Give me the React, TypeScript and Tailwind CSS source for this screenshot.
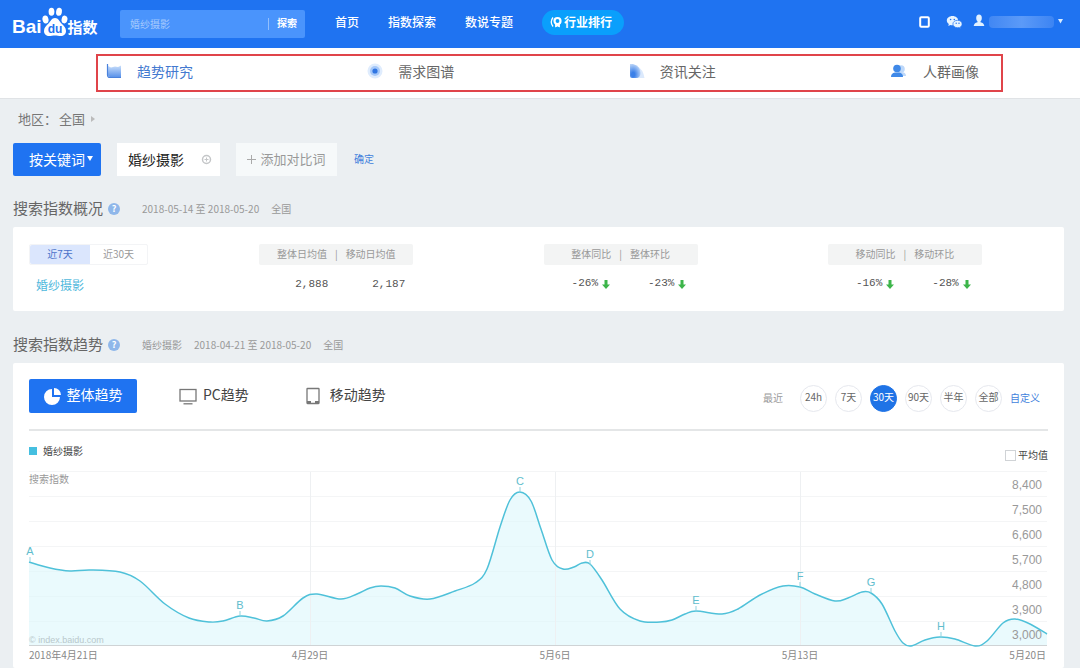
import { ReactNode, useState } from "react";

const navItems = ["首页", "指数探索", "数说专题"];

const sections = [
  { label: "趋势研究", icon: <TrendIcon />, active: true },
  { label: "需求图谱", icon: <DemandIcon /> },
  { label: "资讯关注", icon: <NewsIcon /> },
  { label: "人群画像", icon: <CrowdIcon /> },
];

const periods = ["24h", "7天", "30天", "90天", "半年", "全部"];

// Curve samples in chart units, x from the first day, y down from the top grid line
const points: [number, number][] = [
  [0, 91], [21, 97], [41, 100], [61, 99], [91, 101], [111, 110], [136, 133], [160, 147],
  [181, 151], [194, 150], [211, 145], [225, 147], [238, 150], [254, 145], [274, 127], [288, 123],
  [312, 128], [328, 123], [341, 117], [352, 115], [366, 117], [381, 125], [401, 128], [426, 120],
  [446, 112], [458, 98], [471, 56], [481, 29], [491, 21], [502, 30], [512, 58], [523, 89],
  [534, 98], [545, 96], [553, 92], [561, 93], [573, 109], [591, 138], [611, 150], [631, 151],
  [643, 149], [656, 143], [667, 140], [693, 143], [709, 138], [731, 124], [754, 115], [771, 116],
  [786, 123], [806, 130], [819, 127], [833, 121], [842, 122], [853, 133], [866, 160], [874, 172],
  [882, 175], [896, 169], [911, 166], [926, 168], [946, 175], [958, 170], [974, 152], [986, 148],
  [1001, 153], [1018, 163],
];

const marks = [
  { name: "A", x: 1, y: 91 },
  { name: "B", x: 211, y: 145 },
  { name: "C", x: 491, y: 21 },
  { name: "D", x: 561, y: 94 },
  { name: "E", x: 667, y: 140 },
  { name: "F", x: 771, y: 116 },
  { name: "G", x: 842, y: 122 },
  { name: "H", x: 912, y: 166 },
];

const yTicks = ["8,400", "7,500", "6,600", "5,700", "4,800", "3,900", "3,000"];

function smoothPath(pts: [number, number][]) {
  let d = `M${pts[0][0]} ${pts[0][1]}`;
  for (let i = 0; i < pts.length - 1; i++) {
    const p0 = pts[i - 1] ?? pts[i];
    const p1 = pts[i];
    const p2 = pts[i + 1];
    const p3 = pts[i + 2] ?? p2;
    d += ` C${p1[0] + (p2[0] - p0[0]) / 6} ${p1[1] + (p2[1] - p0[1]) / 6} ${p2[0] - (p3[0] - p1[0]) / 6} ${p2[1] - (p3[1] - p1[1]) / 6} ${p2[0]} ${p2[1]}`;
  }
  return d;
}

function TrendIcon() {
  return (
    <svg width="16" height="16" viewBox="0 0 16 16">
      <defs>
        <linearGradient id="trend" x1="0" y1="0" x2="0" y2="1">
          <stop offset="0" stopColor="#c9dffb" />
          <stop offset="1" stopColor="#5b93ea" />
        </linearGradient>
      </defs>
      <path d="M2 3l3 1.500 4-1 3 .5 3-1.500V14H4q-2 0-2-2z" fill="url(#trend)" />
      <path d="M1.500 1v11q0 2.500 2.500 2.500H15" fill="none" stroke="#4a82dc" strokeWidth="1.200" />
    </svg>
  );
}

function DemandIcon() {
  return (
    <svg width="16" height="16" viewBox="0 0 16 16">
      <circle cx="8" cy="8" r="7.500" fill="#dfecfd" />
      <circle cx="8" cy="8" r="5" fill="#a5c8f9" />
      <circle cx="8" cy="8" r="2.600" fill="#2f75e2" />
    </svg>
  );
}

function NewsIcon() {
  return (
    <svg width="16" height="16" viewBox="0 0 16 16">
      <defs>
        <radialGradient id="news" cx="0.300" cy="0.750" r="0.800">
          <stop offset="0.200" stopColor="#3b80e8" />
          <stop offset="1" stopColor="#c3daf9" />
        </radialGradient>
      </defs>
      <path d="M8 3q6 3 7.500 12H6z" fill="#dbe9fc" />
      <path d="M1 1h3q7 1.500 7.500 9 0 5-4.500 5H3q-2 0-2-2z" fill="url(#news)" />
    </svg>
  );
}

function CrowdIcon() {
  return (
    <svg width="18" height="16" viewBox="0 0 18 16">
      <g fill="#bdd8fa">
        <circle cx="11" cy="6" r="3.800" />
        <path d="M6 13q0-4 5-4 5 0 5 4z" />
      </g>
      <g fill="#3f89e8">
        <circle cx="7" cy="5.500" r="3.800" />
        <path d="M1 14q0-4 4-4.500h4q4 .5 4 4.500z" />
      </g>
    </svg>
  );
}

function Logo() {
  return (
    <a href="#" className="flex items-end text-white" aria-label="Baidu 指数">
      <span className="font-['Liberation_Sans',sans-serif] text-[19px] leading-5 font-bold">Bai</span>
      <svg width="26" height="30" viewBox="0 0 26 30" fill="#fff">
        <ellipse cx="3.500" cy="12.500" rx="3" ry="4" transform="rotate(-12 3.500 12.500)" />
        <ellipse cx="9.500" cy="4.800" rx="2.900" ry="4" />
        <ellipse cx="17" cy="4.800" rx="2.900" ry="4" transform="rotate(8 17 4.800)" />
        <ellipse cx="22.500" cy="12.500" rx="2.900" ry="3.900" transform="rotate(12 22.500 12.500)" />
        <path d="M13 11c3.500 0 4.500 3.500 6.500 5.500 2.500 2.500 4.500 4 4.500 7.500 0 3.500-2.500 5-5 5-2.200 0-3.800-.6-6-.6s-3.800.6-6 .6c-2.500 0-5-1.500-5-5s2-5 4.500-7.500C8.500 14.500 9.500 11 13 11z" />
        <text x="13" y="26" textAnchor="middle" fontSize="12" fontWeight="700" fontFamily="Liberation Sans, sans-serif" fill="#1f73f1">
          du
        </text>
      </svg>
      <span className="text-[15px] leading-5 font-bold">指数</span>
    </a>
  );
}

function DownArrow() {
  return (
    <svg width="8" height="9" viewBox="0 0 8 9" fill="#3db54a" className="mt-1 shrink-0">
      <path d="M2.500 0h3v4.500H8L4 9 0 4.500h2.500z" />
    </svg>
  );
}

function Header() {
  return (
    <header className="flex h-12 items-center bg-[#1f73f1] pr-[17px] pb-1 pl-3 text-xs text-white">
      <div className="w-[108px] shrink-0">
        <Logo />
      </div>
      <form className="mt-1 flex h-7 w-[185px] items-center rounded-xs bg-[#4a94fc]" onSubmit={(e) => e.preventDefault()}>
        <input
          type="text"
          aria-label="关键词"
          defaultValue="婚纱摄影"
          className="w-[149px] border-r border-white/40 pl-[10px] text-[10px] leading-3 text-white/50 outline-none"
        />
        <button type="submit" className="flex-1 pb-0.5 text-[10px] leading-3 font-bold">
          探索
        </button>
      </form>
      <nav className="ml-[30px] flex items-center gap-[29px] font-medium">
        {navItems.map((item) => (
          <a key={item} href="#">
            {item}
          </a>
        ))}
        <a href="#" className="flex h-[25px] items-center gap-0.5 rounded-full bg-[#0a9ffc] pr-3 pl-2 font-bold">
          <svg width="12" height="12" viewBox="0 0 12 12" fill="none" stroke="#fff">
            <path d="M3 1.500Q-.5 6 3 10.500" strokeWidth="1.300" />
            <circle cx="7.500" cy="5" r="3" strokeWidth="2.200" />
            <path d="M5.500 8v3l2-1 2 1V8" fill="#fff" strokeWidth=".8" />
          </svg>
          行业排行
        </a>
      </nav>
      <div className="ml-auto flex items-center">
        <button aria-label="移动版">
          <svg width="11" height="12" viewBox="0 0 11 12" fill="none" stroke="#fff">
            <rect x="1.200" y="1.200" width="8.600" height="9.600" rx="1" strokeWidth="2" />
          </svg>
        </button>
        <button aria-label="微信" className="ml-4">
          <svg width="17" height="14" viewBox="0 0 17 14">
            <path d="M6.500 1C3 1 .8 3.200.8 5.600c0 1.400.8 2.600 2 3.400L2.300 11l2.200-1.100c.6.200 1.300.3 2 .3 3.400 0 5.700-2.200 5.700-4.600S9.900 1 6.500 1z" fill="#e6f3ff" />
            <path d="M11.500 5.300c-2.700 0-4.600 1.700-4.600 3.700s1.900 3.700 4.600 3.700c.6 0 1.100-.1 1.600-.2l1.700.9-.4-1.500c1.100-.7 1.700-1.700 1.700-2.900 0-2-1.900-3.700-4.600-3.700z" fill="#e6f3ff" stroke="#1f73f1" strokeWidth=".7" />
            <g fill="#1f73f1">
              <circle cx="4.600" cy="4.500" r=".8" />
              <circle cx="8.300" cy="4.500" r=".8" />
              <circle cx="10.200" cy="8.200" r=".7" />
              <circle cx="13" cy="8.200" r=".7" />
            </g>
          </svg>
        </button>
        <button aria-label="账号" className="ml-2.5 flex items-center gap-1">
          <svg width="12" height="13" viewBox="0 0 12 13" fill="#e2f1ff" className="mb-1">
            <ellipse cx="6" cy="4" rx="2.800" ry="3.600" />
            <path d="M4.500 6.500h3v1.700Q11 9 11.300 12H.7Q1 9 4.500 8.200z" />
          </svg>
          <span className="h-3 w-[65px] rounded-sm bg-linear-to-r from-[#4187f3] via-[#5b9af8] to-[#3c84f3]" />
          <svg width="5" height="5" viewBox="0 0 5 5" fill="#d8ebff" className="mb-0.5">
            <path d="M0 0h5L2.500 4.500z" />
          </svg>
        </button>
      </div>
    </header>
  );
}

function SectionTitle({ title, children }: { title: string; children: ReactNode }) {
  return (
    <div className="flex items-center text-[10px] leading-4 text-[#999]">
      <h2 className="text-[15px] leading-5 text-[#666]">{title}</h2>
      <button
        aria-label="帮助"
        className="mt-0.5 mr-[22px] ml-[5px] flex size-3 items-center justify-center rounded-full bg-[#8fb7ea] text-[9px] font-bold text-white"
      >
        ?
      </button>
      <div className="flex gap-3 pt-0.5">{children}</div>
    </div>
  );
}

function Overview() {
  const chip = "flex h-[21px] w-[154px] items-center justify-center gap-2 rounded-xs bg-[#f3f4f4] pb-0.5";
  const number = "font-['Liberation_Mono',monospace] text-[11px] leading-4 text-[#555]";

  return (
    <section className="mt-[9px] h-[84px] rounded-xs bg-white px-4 pt-[17px]">
      <table className="w-full table-fixed text-[10px] leading-4 text-[#999]">
        <colgroup>
          <col className="w-[22.6%]" />
          <col className="w-[27.9%]" />
          <col className="w-[27.9%]" />
          <col />
        </colgroup>
        <thead>
          <tr className="text-left">
            <th className="p-0 font-normal">
              <div className="flex h-[21px] w-[119px] rounded-xs border border-[#f3f4f6]">
                <button className="w-[60px] rounded-l-xs bg-[#dbe6fd] pb-0.5 text-[#4a72c9]">近7天</button>
                <button className="flex-1 pb-0.5">近30天</button>
              </div>
            </th>
            {[
              ["整体日均值", "移动日均值"],
              ["整体同比", "整体环比"],
              ["移动同比", "移动环比"],
            ].map(([a, b]) => (
              <th key={a} className="p-0 font-normal">
                <div className={chip}>
                  <span>{a}</span>
                  <span>|</span>
                  <span>{b}</span>
                </div>
              </th>
            ))}
          </tr>
        </thead>
        <tbody>
          <tr>
            <td className="p-0 pt-3 pl-[7px]">
              <a href="#" className="text-xs leading-4 text-[#4fb8dc]">
                婚纱摄影
              </a>
            </td>
            <td className="p-0 pt-2">
              <div className={`flex w-[154px] justify-end gap-11 pr-2 ${number}`}>
                <span>2,888</span>
                <span>2,187</span>
              </div>
            </td>
            {[
              ["-26%", "-23%"],
              ["-16%", "-28%"],
            ].map((pair) => (
              <td key={pair[0]} className="p-0 pt-1.5">
                <div className={`flex w-[154px] gap-[38px] pl-7 ${number}`}>
                  {pair.map((value) => (
                    <span key={value} className="flex items-center gap-1">
                      {value}
                      <DownArrow />
                    </span>
                  ))}
                </div>
              </td>
            ))}
          </tr>
        </tbody>
      </table>
    </section>
  );
}

function TrendChart() {
  const line = smoothPath(points);

  return (
    <svg viewBox="0 0 1019 196" className="block w-full overflow-visible" fontFamily="Noto Sans CJK SC, sans-serif" fontSize="10">
      <g stroke="#f4f5f6">
        {[0, 1, 2, 3, 4, 5, 6].map((i) => (
          <line key={i} x1="0" x2="1018" y1={0.5 + i * 25} y2={0.5 + i * 25} />
        ))}
      </g>
      <path d={`${line} V175 H0 Z`} fill="#dcf6fc" fillOpacity="0.600" />
      <g stroke="#eef0f2">
        {[281, 526, 771].map((x) => (
          <line key={x} x1={x + 0.5} x2={x + 0.5} y1="1" y2="175" />
        ))}
      </g>
      <line x1="0" x2="1018" y1="174.500" y2="174.500" stroke="#cfd3d5" />
      <text x="0" y="12" fill="#999">
        搜索指数
      </text>
      <text x="0" y="172" fill="#b9c8cb" fontFamily="Liberation Sans, sans-serif" fontSize="9">
        © index.baidu.com
      </text>
      <g fill="#999" textAnchor="end" fontFamily="Liberation Sans, sans-serif" fontSize="12">
        {yTicks.map((tick, i) => (
          <text key={tick} x="1013" y={18 + i * 25}>
            {tick}
          </text>
        ))}
      </g>
      <path d={line} fill="none" stroke="#4fc1d9" strokeWidth="1.500" />
      <g fill="#5fbdcd" textAnchor="middle" fontFamily="Liberation Sans, sans-serif" fontSize="11">
        {marks.map(({ name, x, y }) => (
          <g key={name}>
            <line x1={x} x2={x} y1={y - 5} y2={y} stroke="#8fd3e0" />
            <text x={x} y={y - 7}>
              {name}
            </text>
          </g>
        ))}
      </g>
      <g fill="#888">
        <text x="0" y="188">
          2018年4月21日
        </text>
        <text x="281" y="188" textAnchor="middle">
          4月29日
        </text>
        <text x="526" y="188" textAnchor="middle">
          5月6日
        </text>
        <text x="771" y="188" textAnchor="middle">
          5月13日
        </text>
        <text x="1017" y="188" textAnchor="end">
          5月20日
        </text>
      </g>
    </svg>
  );
}

function Trend() {
  const [period, setPeriod] = useState("30天");

  return (
    <section className="mt-[9px] flex-1 rounded-xs bg-white px-4 pt-4">
      <div className="flex items-center border-b-2 border-[#e4e6e7] pb-4 text-sm text-[#444]">
        <button className="flex h-[34px] w-[108px] items-center justify-center gap-1.5 rounded-xs bg-[#1f73f1] text-white">
          <svg width="17" height="17" viewBox="0 0 17 17" fill="#fff">
            <path d="M8 1a8 8 0 1 0 8 8H8z" />
            <path d="M10 0a7 7 0 0 1 7 7h-7z" />
          </svg>
          <span className="pb-1">整体趋势</span>
        </button>
        <button className="ml-[42px] flex items-center gap-1.5">
          <svg width="18" height="17" viewBox="0 0 18 17" fill="none" stroke="#777" strokeWidth="1.300">
            <rect x="1" y="1.500" width="16" height="11.500" />
            <path d="M4.500 15.800h9" />
          </svg>
          <span className="pb-1">PC趋势</span>
        </button>
        <button className="ml-[57px] flex items-center gap-2.5">
          <svg width="14" height="18" viewBox="0 0 14 18" fill="none" stroke="#777" strokeWidth="1.300">
            <rect x="1" y="1.500" width="12" height="15" rx="0.500" />
            <path d="M1 15h4m4 0h4" strokeWidth="2" />
          </svg>
          <span className="pb-1">移动趋势</span>
        </button>
        <div className="ml-auto flex items-center pt-1 text-[10px] leading-4 text-[#666]">
          <span className="mr-[17px] text-[#999]">最近</span>
          <div className="flex gap-2">
            {periods.map((p) => (
              <button
                key={p}
                onClick={() => setPeriod(p)}
                className={`flex size-[27px] items-center justify-center rounded-full border pb-0.5 ${
                  p === period ? "border-[#1f73e6] bg-[#1f73e6] text-white" : "border-[#e6e8ee]"
                }`}
              >
                {p}
              </button>
            ))}
          </div>
          <a href="#" className="mr-2 ml-2 text-[#3f7fdc]">
            自定义
          </a>
        </div>
      </div>
      <div className="flex justify-between pt-3 text-[10px] leading-4 text-[#444]">
        <span className="flex h-4 items-center gap-1.5">
          <span className="size-2 bg-[#45bfe0]" />
          婚纱摄影
        </span>
        <label className="mt-1 flex items-center gap-0.5">
          <input type="checkbox" className="size-[11px] appearance-none border border-[#d0d3d6] checked:bg-[#1f73f1]" />
          平均值
        </label>
      </div>
      <div className="mt-2">
        <TrendChart />
      </div>
    </section>
  );
}

export default function App() {
  return (
    <div className="flex min-h-screen flex-col bg-[#ebeff2] font-['Noto_Sans_CJK_SC',sans-serif]">
      <Header />
      <div className="border-b border-[#e0e3e6] bg-white pt-1.5 pr-[77px] pb-1.5 pl-24">
        <nav className="flex h-[38px] items-center justify-between border-2 border-[#e0444a] pr-[22px] pb-1 pl-2 text-sm">
          {sections.map(({ label, icon, active }) => (
            <a key={label} href="#" className={`flex items-center gap-[15px] ${active ? "text-[#4379d0]" : "text-[#666]"}`}>
              {icon}
              {label}
            </a>
          ))}
        </nav>
      </div>
      <main className="flex flex-1 flex-col pr-4 pl-[13px]">
        <div className="mt-2.5 flex items-center gap-1.5 pl-[5px] text-[13px] leading-5 text-[#777]">
          <span>地区：</span>
          <span className="-ml-1">全国</span>
          <svg width="4" height="6" viewBox="0 0 4 6" fill="#bbb">
            <path d="M0 0v6l4-3z" />
          </svg>
        </div>
        <div className="mt-3.5 flex items-center text-sm">
          <button className="flex h-[33px] w-[88px] items-center justify-end gap-0.5 rounded-xs bg-[#1f73f1] pr-2 pb-0.5 text-white">
            按关键词
            <svg width="6" height="5" viewBox="0 0 6 5" fill="#fff">
              <path d="M0 0h6L3 5z" />
            </svg>
          </button>
          <div className="ml-4 flex h-[33px] w-[103px] items-center bg-white pr-2 pl-[11px]">
            <input type="text" aria-label="关键词" defaultValue="婚纱摄影" className="w-[60px] min-w-0 flex-1 pb-0.5 text-[#222] outline-none" />
            <button aria-label="移除">
              <svg width="11" height="11" viewBox="0 0 11 11" fill="none" stroke="#c4c6c8" strokeWidth="1.500">
                <circle cx="5.500" cy="5.500" r="4" />
                <path d="M3.500 5.500h4m-2-2v4" strokeWidth="1" />
              </svg>
            </button>
          </div>
          <button className="ml-4 flex h-[33px] w-[101px] items-center justify-center gap-1 bg-[#f6f9fa] text-[13px] text-[#999]">
            <svg width="9" height="9" viewBox="0 0 9 9" stroke="#aaa">
              <path d="M0 4.500h9M4.500 0v9" />
            </svg>
            添加对比词
          </button>
          <a href="#" className="ml-[17px] text-[10px] text-[#3f7fdc]">
            确定
          </a>
        </div>
        <div className="mt-[22px]">
          <SectionTitle title="搜索指数概况">
            <span>2018-05-14 至 2018-05-20</span>
            <span>全国</span>
          </SectionTitle>
        </div>
        <Overview />
        <div className="mt-[23px]">
          <SectionTitle title="搜索指数趋势">
            <span>婚纱摄影</span>
            <span>2018-04-21 至 2018-05-20</span>
            <span>全国</span>
          </SectionTitle>
        </div>
        <Trend />
      </main>
    </div>
  );
}
